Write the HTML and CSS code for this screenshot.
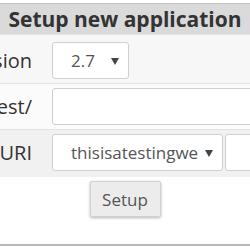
FILE: index.html
```html
<!DOCTYPE html>
<html>
<head>
<meta charset="utf-8">
<link rel="stylesheet" href="styles.css">
</head>
<body>
<div class="panel">
  <div class="head">Setup new application</div>
  <div class="row row-a">
    <div class="label"><span>Python version</span></div>
    <div class="field">
      <div class="sel sel-short"><span>2.7</span></div>
    </div>
  </div>
  <div class="row row-b">
    <div class="label"><span>http://localhost/test/</span></div>
    <div class="field">
      <input class="inp inp-wide" type="text">
    </div>
  </div>
  <div class="row row-c">
    <div class="label"><span>PROJECTURI</span></div>
    <div class="field">
      <div class="sel sel-long"><span>thisisatestingwe</span></div>
      <input class="inp inp-rest" type="text">
    </div>
  </div>
  <div class="row row-d">
    <button class="btn" type="button">Setup</button>
  </div>
</div>
</body>
</html>
```

FILE: styles.css
```css
html, body {
  margin: 0;
  padding: 0;
  background: #ffffff;
  overflow: hidden;
}
body {
  font-family: "Open Sans", "Liberation Sans", sans-serif;
  color: #333;
  padding-top: 3px;
}
.panel {
  border-top: 1px solid #c4c4c4;
  border-bottom: 2px solid #b8b8b8;
  width: 250px;
}
.head {
  background: #dadada;
  height: 30px;
  line-height: 30px;
  text-align: center;
  font-weight: 700;
  font-size: 21px;
  color: #333;
  white-space: nowrap;
  border-bottom: 1px solid #e4e4e4;
}
.row {
  display: flex;
  align-items: center;
  gap: 20px;
  border-bottom: 1px solid #e2e2e2;
}
.row-a { background: #f7f7f7; padding: 7px 0 4px; }
.row-b { background: #fbfbfb; padding: 4px 0 4px; }
.row-c { background: #f1f1f1; padding: 4px 0 6px; border-bottom: none; }
.row-d {
  background: #ffffff;
  padding: 4px 0 27px;
  justify-content: center;
  border-bottom: none;
}
.label {
  width: 32px;
  flex: none;
  display: flex;
  justify-content: flex-end;
  font-size: 20px;
  color: #333;
  white-space: nowrap;
}
.field {
  display: flex;
  gap: 2px;
  flex: none;
}
.sel {
  position: relative;
  box-sizing: border-box;
  height: 37px;
  border: 1px solid #cfcfcf;
  border-radius: 3px;
  background: #fff;
  padding-left: 18px;
  font-size: 17px;
  line-height: 35px;
  color: #555;
  white-space: nowrap;
}
.sel::after {
  content: "";
  position: absolute;
  top: 15px;
  right: 9px;
  border-left: 4px solid transparent;
  border-right: 4px solid transparent;
  border-top: 7px solid #444;
}
.sel-short { width: 77px; }
.sel-long { width: 171px; }
.inp {
  box-sizing: border-box;
  height: 37px;
  border: 1px solid #cfcfcf;
  border-radius: 3px;
  background: #fff;
  margin: 0;
  padding: 0 8px;
  font-family: inherit;
  font-size: 17px;
}
.inp-wide { width: 240px; }
.inp-rest { width: 120px; }
.btn {
  width: 71px;
  height: 36px;
  box-sizing: border-box;
  background: #ececec;
  border: 1px solid #d2d2d2;
  border-radius: 2px;
  box-shadow: 0 1px 3px rgba(0, 0, 0, 0.3);
  font-family: inherit;
  font-size: 17px;
  color: #555;
  padding: 0;
}
```
